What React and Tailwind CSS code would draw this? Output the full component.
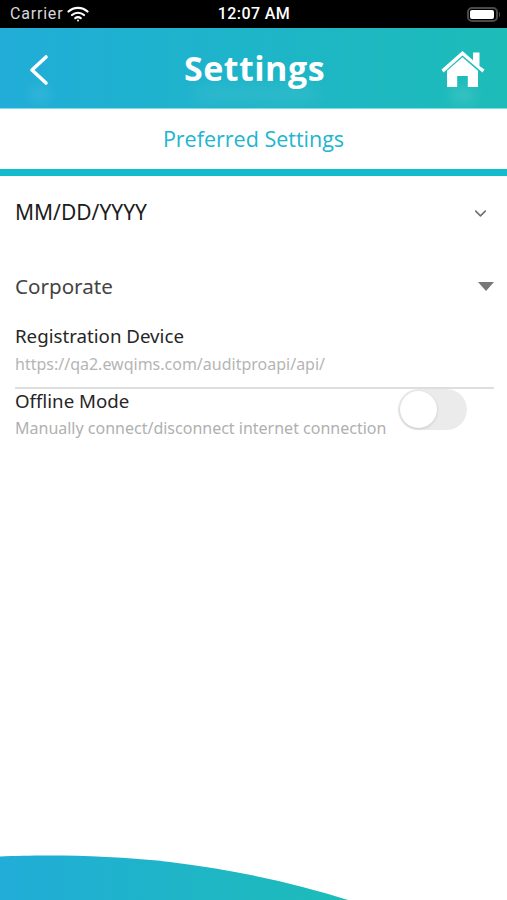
import { ChevronDown } from "lucide-react";

function Wifi() {
  return (
    <svg width="22" height="16" viewBox="0 0 22 16" fill="none" stroke="white" strokeWidth="2.2" strokeLinecap="round">
      <path d="M1.5 5.5C6.8 0.6 15.2 0.6 20.5 5.5" />
      <path d="M5 9C8.4 6 13.6 6 17 9" />
      <path d="M8.3 12.2C9.8 11 12.2 11 13.7 12.2" />
      <circle cx="11" cy="14.6" r="1" fill="white" stroke="none" />
    </svg>
  );
}

function Battery() {
  return (
    <div className="flex items-center gap-px">
      <div className="flex h-[15px] w-[31px] items-center justify-center rounded-[5px] border-2 border-[#4a4a4a]">
        <div className="h-[9px] w-[24px] rounded-[2px] bg-white" />
      </div>
      <div className="h-[5px] w-[1.5px] rounded-r bg-[#4a4a4a]" />
    </div>
  );
}

function HomeIcon() {
  return (
    <svg width="44" height="38" viewBox="0 0 44 38" fill="white">
      <path d="M0.5 19.5 21.5 1l10.5 9.2V2.5h6.5v13.4l5 3.6-2 3L21.5 5.6 2.5 22.5z" />
      <path d="M6 20.8 21.5 7.3 37 20.8V37H26.8V26H16.2V37H6z" />
    </svg>
  );
}

export default function App() {
  return (
    <div className="flex min-h-[900px] flex-col overflow-hidden bg-white font-['Open_Sans',sans-serif]">
      {/* STATUS BAR */}
      <div className="flex h-[28px] items-center justify-between bg-black pl-[10px] pr-[7px] font-['Roboto',sans-serif] text-white">
        <div className="flex w-[120px] items-center gap-[4px]">
          <span className="text-[16px] tracking-wider text-[#d8d8d8]">Carrier</span>
          <Wifi />
        </div>
        <span className="-ml-[2px] text-[16px] font-medium tracking-wide">12:07 AM</span>
        <div className="flex w-[120px] justify-end">
          <Battery />
        </div>
      </div>

      {/* HEADER */}
      <header className="flex h-[80px] items-center justify-between bg-gradient-to-r from-[#21add8] to-[#1dbcb8] pl-[28px] pr-[22px]">
        <div className="relative mt-[3px]">
          <svg width="22" height="32" viewBox="0 0 22 32" fill="none" stroke="white" strokeWidth="3.6" strokeLinecap="round" strokeLinejoin="round">
            <path d="M18 3 4 16l14 13" />
          </svg>
          <div className="absolute left-[2px] top-[32px] h-[16px] w-[20px] rounded-full bg-white/10 blur-[7px]" />
        </div>
        <div className="relative ml-[18px]">
          <h1 className="text-[34px] font-bold leading-[48px] tracking-[0.5px] text-white">Settings</h1>
          <div className="absolute left-[8px] top-[44px] h-[12px] w-[128px] rounded-full bg-white/10 blur-[8px]" />
        </div>
        <div className="relative mt-[2px]">
          <HomeIcon />
          <div className="absolute left-[10px] top-[38px] h-[14px] w-[24px] rounded-full bg-white/15 blur-[7px]" />
        </div>
      </header>

      {/* SECTION TITLE */}
      <div className="flex h-[61px] items-center justify-center border-t border-[#7fdbe6]">
        <h2 className="text-[21.5px] text-[#21b5cf]">Preferred Settings</h2>
      </div>
      <div className="h-[7px] bg-[#12bccb]" />

      {/* FORM */}
      <div className="flex flex-col pl-[15px] pr-[13px] font-['Noto_Sans',sans-serif]">
        <div className="flex h-[74px] items-center justify-between">
          <span className="text-[21px] text-[#1c1c1c]">MM/DD/YYYY</span>
          <ChevronDown size={19} strokeWidth={2} className="mr-[4px] text-[#707070]" />
        </div>

        <div className="flex h-[74px] items-center justify-between pb-[1px]">
          <span className="text-[20.6px] text-[#444444]">Corporate</span>
          <div className="h-0 w-0 border-x-[8px] border-t-[9px] border-x-transparent border-t-[#777777]" />
        </div>

        <div className="flex h-[65px] flex-col border-b-2 border-[#dedede]">
          <span className="-mt-[1px] text-[18.7px] leading-[26px] text-[#262626]">Registration Device</span>
          <span className="mt-[4px] text-[16px] leading-[22px] text-[#b5b5b5]">
            https://qa2.ewqims.com/auditproapi/api/
          </span>
        </div>

        <div className="flex items-start justify-between">
          <div className="-mt-[1px] flex flex-col">
            <span className="text-[18.7px] leading-[26px] text-[#262626]">Offline Mode</span>
            <span className="mt-[3px] text-[16px] leading-[22px] text-[#b0b0b0]">
              Manually connect/disconnect internet connection
            </span>
          </div>
          <div className="mr-[27px] flex h-[41px] w-[69px] items-center rounded-full bg-[#ebebeb] p-[2px]">
            <div className="h-[37px] w-[37px] rounded-full bg-white shadow-[0_1px_3px_rgba(0,0,0,0.15)]" />
          </div>
        </div>
      </div>

      {/* BOTTOM WAVE */}
      <svg className="mt-auto block" width="507" height="45" viewBox="0 0 507 45">
        <defs>
          <linearGradient id="wave" x1="0" x2="1" y1="0" y2="0">
            <stop offset="0" stopColor="#21add8" />
            <stop offset="1" stopColor="#1dbcb8" />
          </linearGradient>
        </defs>
        <path d="M0 1.5C40-0.2 105-0.5 170 7 235 15 295 28 348 45H0z" fill="url(#wave)" />
      </svg>
    </div>
  );
}
